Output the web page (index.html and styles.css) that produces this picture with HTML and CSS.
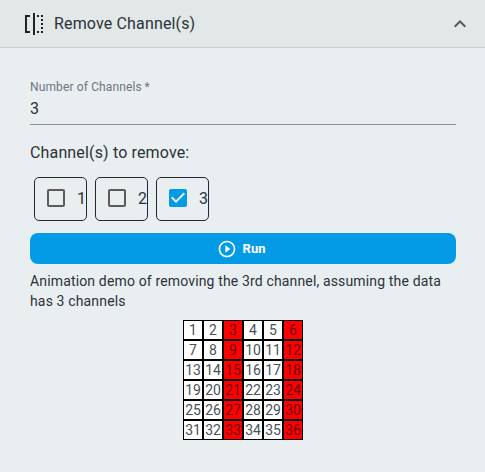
FILE: index.html
```html
<!DOCTYPE html>
<html lang="en">
<head>
<meta charset="utf-8">
<title>Remove Channel(s)</title>
<link rel="stylesheet" href="styles.css">
</head>
<body>
<section class="panel">
  <header class="head">
    <svg class="head-icon" width="24" height="24" viewBox="0 0 24 24"><path fill="#1f2326" d="M3 3h5v2H5v14h3v2H3zM11 1h2v22h-2zM15 3h2v2h-2zM19 3h2v2h-2zM19 7h2v2h-2zM19 11h2v2h-2zM19 15h2v2h-2zM19 19h2v2h-2zM15 19h2v2h-2z"/></svg>
    <span class="head-title">Remove Channel(s)</span>
    <svg class="head-chevron" width="24" height="24" viewBox="0 0 24 24"><path fill="#50555a" d="M12 8l-6 6 1.41 1.41L12 10.83l4.59 4.58L18 14z"/></svg>
  </header>
  <div class="body">
    <div class="field">
      <div class="field-label">Number of Channels&thinsp;*</div>
      <div class="field-value">3</div>
    </div>
    <div class="subhead">Channel(s) to remove:</div>
    <div class="checks">
      <div class="check">
        <svg class="box" width="24" height="24" viewBox="0 0 24 24"><path fill="#5f5a5c" d="M19 5v14H5V5h14m0-2H5c-1.1 0-2 .9-2 2v14c0 1.1.9 2 2 2h14c1.1 0 2-.9 2-2V5c0-1.100-.9-2-2-2z"/></svg>
        <span class="check-num">1</span>
      </div>
      <div class="check">
        <svg class="box" width="24" height="24" viewBox="0 0 24 24"><path fill="#5f5a5c" d="M19 5v14H5V5h14m0-2H5c-1.1 0-2 .9-2 2v14c0 1.1.9 2 2 2h14c1.1 0 2-.9 2-2V5c0-1.100-.9-2-2-2z"/></svg>
        <span class="check-num">2</span>
      </div>
      <div class="check">
        <svg class="box" width="24" height="24" viewBox="0 0 24 24"><path fill="#039be5" d="M19 3H5c-1.110 0-2 .9-2 2v14c0 1.100.89 2 2 2h14c1.110 0 2-.9 2-2V5c0-1.100-.89-2-2-2zm-9 14l-5-5 1.410-1.410L10 14.170l7.590-7.590L19 8l-9 9z"/></svg>
        <span class="check-num">3</span>
      </div>
    </div>
    <button class="run" type="button">
      <svg width="20" height="20" viewBox="0 0 24 24"><path fill="#fff" d="M10 16.500l6-4.500-6-4.500v9zM12 2C6.480 2 2 6.480 2 12s4.480 10 10 10 10-4.480 10-10S17.520 2 12 2zm0 18c-4.410 0-8-3.590-8-8s3.590-8 8-8 8 3.590 8 8-3.590 8-8 8z"/></svg>
      <span>Run</span>
    </button>
    <p class="desc">Animation demo of removing the 3rd channel, assuming the data has 3 channels</p>
    <div class="grid">
      <div>1</div><div>2</div><div class="off">3</div><div>4</div><div>5</div><div class="off">6</div>
      <div>7</div><div>8</div><div class="off">9</div><div>10</div><div>11</div><div class="off">12</div>
      <div>13</div><div>14</div><div class="off">15</div><div>16</div><div>17</div><div class="off">18</div>
      <div>19</div><div>20</div><div class="off">21</div><div>22</div><div>23</div><div class="off">24</div>
      <div>25</div><div>26</div><div class="off">27</div><div>28</div><div>29</div><div class="off">30</div>
      <div>31</div><div>32</div><div class="off">33</div><div>34</div><div>35</div><div class="off">36</div>
    </div>
  </div>
</section>
</body>
</html>
```
FILE: styles.css
```css
* { box-sizing: border-box; }
html, body { margin: 0; height: 100%; }
body {
  background: #e9eef1;
  color: #2b3238;
  font-family: Roboto, "Liberation Sans", sans-serif;
  overflow: hidden;
}
.head {
  display: flex;
  align-items: center;
  height: 48px;
  padding: 0 13px 0 22px;
  background: #e2e7e7;
  border-bottom: 1px solid #c9cfd0;
}
.head-icon { flex: none; margin-right: 8px; }
.head-title { flex: 1; font-size: 16px; letter-spacing: .15px; color: #2b3238; }
.head-chevron { flex: none; }
.body { padding: 32px 29px 0 30px; }
.field {
  height: 45px;
  border-bottom: 1px solid #8b9093;
}
.field-label {
  font-size: 12px;
  line-height: 14px;
  letter-spacing: .13px;
  color: #6d777e;
}
.field-value {
  margin-top: 3px;
  font-size: 16px;
  line-height: 24px;
  color: #2b3238;
}
.subhead {
  margin-top: 18px;
  font-size: 16px;
  line-height: 19px;
  letter-spacing: .15px;
  color: #2b3238;
}
.checks {
  display: flex;
  gap: 8px;
  margin-top: 15px;
  padding-left: 4px;
}
.check {
  display: flex;
  align-items: center;
  width: 53px;
  height: 44px;
  padding: 0 0 2px 9px;
  border: 1px solid #24282b;
  border-radius: 5px;
}
.box { flex: none; }
.check-num {
  margin-left: 9px;
  font-size: 16px;
  color: #2b3238;
}
.run {
  display: flex;
  align-items: center;
  justify-content: center;
  gap: 6px;
  width: 100%;
  height: 31px;
  margin-top: 12px;
  padding: 0 4px 0 0;
  border: 0;
  border-radius: 8px;
  background: #039be5;
  color: #fff;
  font: 700 13px Roboto, "Liberation Sans", sans-serif;
}
.desc {
  margin: 7px 0 0;
  font-size: 14px;
  line-height: 20px;
  letter-spacing: .15px;
  color: #2b3238;
}
.grid {
  display: grid;
  grid-template-columns: repeat(6, 18px);
  grid-auto-rows: 18px;
  gap: 2px;
  width: 120px;
  margin: 9px auto 0;
  padding: 1px;
  background: #000;
}
.grid div {
  display: flex;
  align-items: center;
  justify-content: center;
  background: #fff;
  font-size: 14px;
  letter-spacing: -.1px;
  color: #4a5157;
}
.grid .off { background: #f00; color: #6a0a0c; }
```
